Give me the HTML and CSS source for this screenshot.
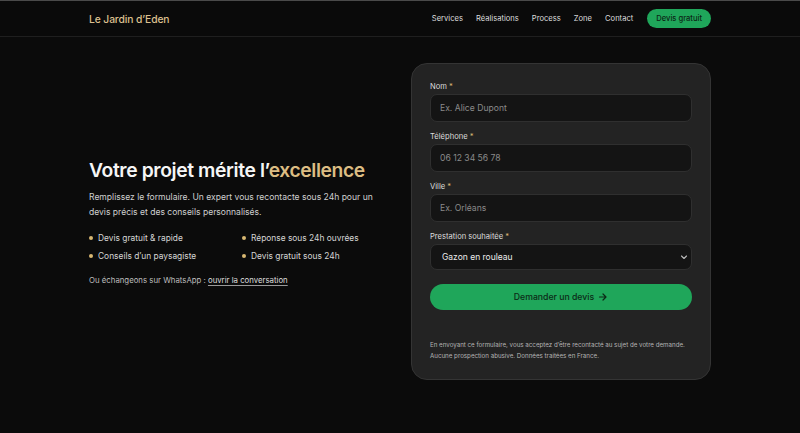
FILE: index.html
```html
<!DOCTYPE html>
<html lang="fr">
<head>
<meta charset="utf-8">
<title>Le Jardin d'Eden — Devis</title>
<link rel="stylesheet" href="styles.css">
</head>
<body>
<header class="header">
  <div class="container header-inner">
    <a class="logo" href="#">Le Jardin d’Eden</a>
    <nav class="nav">
      <a href="#">Services</a>
      <a href="#">Réalisations</a>
      <a href="#">Process</a>
      <a href="#">Zone</a>
      <a href="#">Contact</a>
      <a href="#" class="nav-cta">Devis gratuit</a>
    </nav>
  </div>
</header>
<main class="container hero">
  <section class="intro">
    <h1 class="title">Votre projet mérite l’<span class="gold">excellence</span></h1>
    <p class="lead">Remplissez le formulaire. Un expert vous recontacte sous 24h pour un devis précis et des conseils personnalisés.</p>
    <ul class="perks">
      <li>Devis gratuit &amp; rapide</li>
      <li>Réponse sous 24h ouvrées</li>
      <li>Conseils d’un paysagiste</li>
      <li>Devis gratuit sous 24h</li>
    </ul>
    <p class="whatsapp">Ou échangeons sur WhatsApp : <a href="#">ouvrir la conversation</a></p>
  </section>
  <form class="card">
    <div class="field">
      <label>Nom <span class="req">*</span></label>
      <input type="text" placeholder="Ex. Alice Dupont">
    </div>
    <div class="field">
      <label>Téléphone <span class="req">*</span></label>
      <input type="text" placeholder="06 12 34 56 78">
    </div>
    <div class="field">
      <label>Ville <span class="req">*</span></label>
      <input type="text" placeholder="Ex. Orléans">
    </div>
    <div class="field">
      <label>Prestation souhaitée <span class="req">*</span></label>
      <div class="select">
        <span>Gazon en rouleau</span>
        <svg width="8" height="8" viewBox="0 0 8 8"><path d="M1.5 3 L4 5.5 L6.5 3" fill="none" stroke="#bbb" stroke-width="1.1" stroke-linecap="round" stroke-linejoin="round"/></svg>
      </div>
    </div>
    <button type="button" class="submit">Demander un devis
      <svg width="10" height="10" viewBox="0 0 10 10"><path d="M1.5 5 H8 M5 2 L8 5 L5 8" fill="none" stroke="#0c2a17" stroke-width="1.2" stroke-linecap="round" stroke-linejoin="round"/></svg>
    </button>
    <p class="legal">En envoyant ce formulaire, vous acceptez d’être recontacté au sujet de votre demande.<br>Aucune prospection abusive. Données traitées en France.</p>
  </form>
</main>
</body>
</html>
```

FILE: styles.css
```css
* { box-sizing: border-box; }
html, body { margin: 0; padding: 0; }
body {
  background: #0b0b0b;
  color: #e8e8e8;
  font-family: Inter, "Noto Sans", sans-serif;
  border-top: 1px solid #4a4a4a;
  min-height: 433px;
}
a { color: inherit; text-decoration: none; }
.container { width: 622px; margin: 0 auto; }
.header { border-bottom: 1px solid #1f1f1f; background: #0a0a0a; }
.header-inner {
  height: 35px;
  display: flex;
  align-items: center;
  justify-content: space-between;
}
.logo { color: #dcc08f; font-size: 10.3px; font-weight: 500; letter-spacing: -0.01em; }
.nav { display: flex; align-items: center; gap: 13px; font-size: 7.6px; color: #dddddd; }
.nav-cta {
  background: #1fa65a;
  color: #0b2616;
  font-weight: 500;
  height: 19px;
  padding: 0 9px;
  border-radius: 10px;
  display: flex;
  align-items: center;
  margin-left: 1px;
}
.hero {
  display: grid;
  grid-template-columns: 292px 300px;
  column-gap: 30px;
  align-items: center;
  padding-top: 26px;
}
.title {
  margin: 0 0 8px;
  font-size: 19.3px;
  font-weight: 600;
  letter-spacing: -0.02em;
  color: #f6f6f6;
  line-height: 24px;
}
.gold { color: #dcbd83; }
.lead { margin: 0 0 9px; font-size: 8.55px; line-height: 15px; color: #d0d0d0; }
.perks {
  list-style: none; margin: 0 0 9px; padding: 0;
  display: grid; grid-template-columns: 153px 1fr;
  row-gap: 0;
  font-size: 8.4px; color: #d6d6d6;
}
.perks li { position: relative; padding-left: 9px; line-height: 18px; }
.perks li::before {
  content: ""; position: absolute; left: 0; top: 7px;
  width: 4px; height: 4px; border-radius: 50%; background: #d8b872;
}
.whatsapp { margin: 0; font-size: 7.8px; color: #bdbdbd; line-height: 12px; }
.whatsapp a { color: #dedede; text-decoration: underline; text-underline-offset: 2px; text-decoration-color: #999; }
.card {
  background: #232323;
  border: 1px solid #343434;
  border-radius: 16px;
  padding: 17px 18px 18px;
  margin: 0;
}
.field { margin-bottom: 9px; }
.field label { display: block; font-size: 7.6px; line-height: 12px; color: #dcdcdc; margin-bottom: 1px; }
.req { color: #d8b872; }
.field input, .select {
  display: block; width: 100%;
  height: 28px;
  background: #141414;
  border: 1px solid #2f2f2f;
  border-radius: 7px;
  padding: 0 9px;
  font-family: inherit;
  font-size: 8.6px;
  color: #e0e0e0;
  outline: none;
}
.field input::placeholder { color: #8a8a8a; }
.select {
  height: 26px;
  display: flex; align-items: center; justify-content: space-between;
  padding: 0 3px 0 11px;
  color: #ececec;
  font-size: 8.5px;
}
.submit {
  margin-top: 14px;
  width: 100%; height: 26px;
  border: 0; border-radius: 13px;
  background: #1fa65a;
  color: #0c2a17;
  font-family: inherit; font-size: 8.7px; font-weight: 500;
  display: flex; align-items: center; justify-content: center; gap: 4px;
}
.legal {
  margin: 29px 0 0;
  font-size: 6.2px;
  line-height: 11px;
  color: #b4b4b4;
}
```
